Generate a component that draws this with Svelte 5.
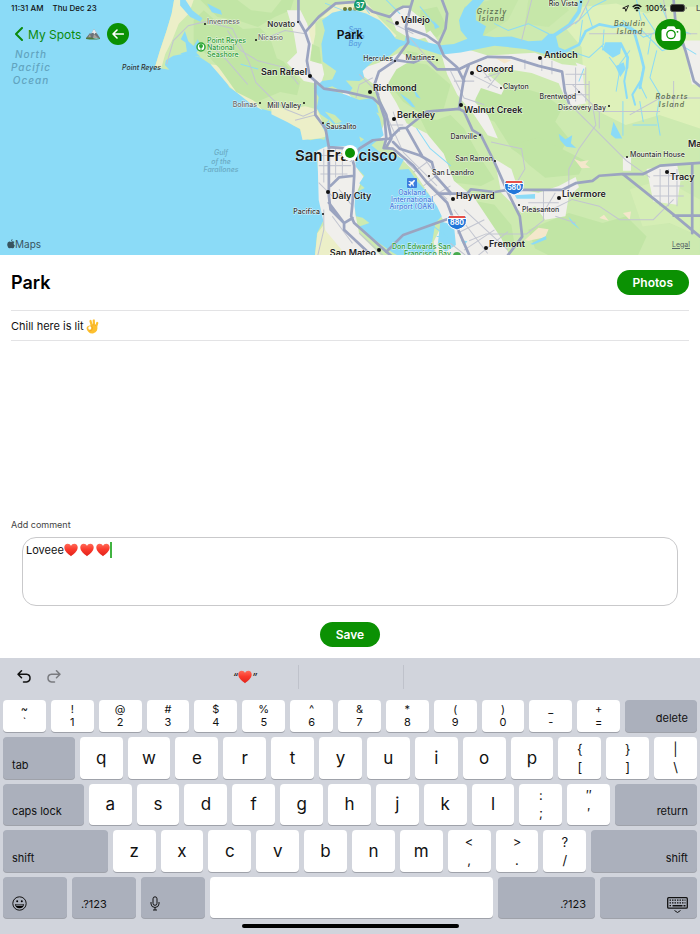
<script lang="ts">
	type Label = { t: string; x: number; y: number; kind: string; dot?: number[]; end?: boolean };

	const labels: Label[] = [
		{ t: 'Inverness', x: 207, y: 24, kind: 'village', dot: [205, 24] },
		{ t: 'Nicasio', x: 258, y: 40, kind: 'village', dot: [256, 40] },
		{ t: 'Bolinas', x: 257, y: 107, kind: 'village', dot: [260, 103], end: true },
		{ t: 'Mill Valley', x: 301, y: 108, kind: 'town', dot: [304, 103], end: true },
		{ t: 'Hercules', x: 393, y: 61, kind: 'town', dot: [395, 61], end: true },
		{ t: 'Martinez', x: 435, y: 60, kind: 'town', dot: [437, 60], end: true },
		{ t: 'Sausalito', x: 326, y: 129, kind: 'town', dot: [323, 123] },
		{ t: 'Pacifica', x: 320, y: 214, kind: 'town', dot: [323, 214], end: true },
		{ t: 'San Leandro', x: 432, y: 175, kind: 'town', dot: [429, 176] },
		{ t: 'San Ramon', x: 493, y: 161, kind: 'town', dot: [495, 161], end: true },
		{ t: 'Danville', x: 477, y: 139, kind: 'town', dot: [480, 135], end: true },
		{ t: 'Pleasanton', x: 522, y: 212, kind: 'town', dot: [519, 205] },
		{ t: 'Mountain House', x: 630, y: 157, kind: 'town', dot: [627, 157] },
		{ t: 'Clayton', x: 503, y: 89, kind: 'town', dot: [501, 88] },
		{ t: 'Brentwood', x: 576, y: 99, kind: 'town', dot: [579, 92], end: true },
		{ t: 'Discovery Bay', x: 606, y: 110, kind: 'town', dot: [609, 106], end: true },
		{ t: 'Rio Vista', x: 578, y: 6, kind: 'town', dot: [581, 2], end: true },
		{ t: 'Novato', x: 295, y: 27, kind: 'mid', dot: [298, 22], end: true },
		{ t: 'Vallejo', x: 401, y: 23, kind: 'city', dot: [397, 23] },
		{ t: 'San Rafael', x: 307, y: 75, kind: 'city', dot: [310, 76], end: true },
		{ t: 'Richmond', x: 373, y: 91, kind: 'city', dot: [370, 92] },
		{ t: 'Berkeley', x: 397, y: 118, kind: 'city', dot: [394, 119] },
		{ t: 'Daly City', x: 332, y: 199, kind: 'city', dot: [328, 192] },
		{ t: 'San Mateo', x: 376, y: 256, kind: 'city', dot: [379, 250], end: true },
		{ t: 'Hayward', x: 456, y: 199, kind: 'city', dot: [453, 199] },
		{ t: 'Livermore', x: 562, y: 197, kind: 'city', dot: [559, 198] },
		{ t: 'Fremont', x: 489, y: 247, kind: 'city', dot: [486, 248] },
		{ t: 'Tracy', x: 670, y: 180, kind: 'city', dot: [667, 172] },
		{ t: 'Ma', x: 688, y: 147, kind: 'city' },
		{ t: 'Walnut Creek', x: 464, y: 113, kind: 'city', dot: [461, 105] },
		{ t: 'Concord', x: 476, y: 72, kind: 'city', dot: [472, 73] },
		{ t: 'Antioch', x: 544, y: 58, kind: 'city', dot: [540, 58] },
		{ t: 'San Francisco', x: 295, y: 161, kind: 'metro' },
		{ t: 'Point Reyes', x: 122, y: 70, kind: 'cape' },
		{ t: 'Point Reyes', x: 207, y: 43, kind: 'park' },
		{ t: 'National', x: 207, y: 50, kind: 'park' },
		{ t: 'Seashore', x: 207, y: 57, kind: 'park' },
		{ t: 'Don Edwards San', x: 451, y: 249, kind: 'park', end: true },
		{ t: 'Francisco Bay', x: 451, y: 256, kind: 'park', end: true },
		{ t: 'Oakland', x: 412, y: 195, kind: 'airport' },
		{ t: 'International', x: 412, y: 202, kind: 'airport' },
		{ t: 'Airport (OAK)', x: 412, y: 209, kind: 'airport' },
		{ t: 'San', x: 355, y: 32, kind: 'bay' },
		{ t: 'Pablo', x: 355, y: 39, kind: 'bay' },
		{ t: 'Bay', x: 355, y: 46, kind: 'bay' },
		{ t: 'North', x: 31, y: 58, kind: 'ocean' },
		{ t: 'Pacific', x: 31, y: 71, kind: 'ocean' },
		{ t: 'Ocean', x: 31, y: 84, kind: 'ocean' },
		{ t: 'Gulf', x: 221, y: 155, kind: 'gulf' },
		{ t: 'of the', x: 221, y: 164, kind: 'gulf' },
		{ t: 'Farallones', x: 221, y: 172, kind: 'gulf' },
		{ t: 'Grizzly', x: 492, y: 14, kind: 'island' },
		{ t: 'Island', x: 492, y: 21, kind: 'island' },
		{ t: 'Bouldin', x: 630, y: 26, kind: 'island' },
		{ t: 'Island', x: 630, y: 34, kind: 'island' },
		{ t: 'Roberts', x: 672, y: 99, kind: 'island' },
		{ t: 'Island', x: 672, y: 107, kind: 'island' }
	];

	const pairs = ['~`', '!1', '@2', '#3', '$4', '%5', '^6', '&7', '*8', '(9', ')0', '_-', '+='];

	type Key = { a: string; b?: string; size?: string; icon?: string };
	const letters = (s: string): Key[] => [...s].map((a) => ({ a }));
	const twins = (list: string[]): Key[] => list.map((p) => ({ a: p[0], b: p[1] }));

	const rows: Key[][] = [
		[...twins(pairs), { a: 'delete', size: 'w72 right' }],
		[{ a: 'tab', size: 'w72' }, ...letters('qwertyuiop'), ...twins(['{[', '}]', '|\\'])],
		[{ a: 'caps lock', size: 'w81' }, ...letters('asdfghjkl'), ...twins([':;', '″′']), { a: 'return', size: 'w82 right' }],
		[{ a: 'shift', size: 'w105' }, ...letters('zxcvbnm'), ...twins(['<,', '>.', '?/']), { a: 'shift', size: 'w106 right' }],
		[
			{ a: 'Emoji', size: 'w64', icon: 'emoji' },
			{ a: '.?123', size: 'w64' },
			{ a: 'Dictate', size: 'w64', icon: 'mic' },
			{ a: ' ', size: 'space' },
			{ a: '.?123', size: 'w97 right' },
			{ a: 'Hide keyboard', size: 'w97 right', icon: 'hide' }
		]
	];

	let comment = $state('Loveee');
</script>

{#snippet heart()}
	<svg class="heart" viewBox="0 0 14 14" aria-hidden="true">
		<defs>
			<linearGradient id="red" x1="0" y1="0" x2="0" y2="1">
				<stop offset="0" stop-color="#ff6a58" />
				<stop offset=".45" stop-color="#fb3a2c" />
				<stop offset="1" stop-color="#e0231b" />
			</linearGradient>
		</defs>
		<path fill="url(#red)" d="M7 13.3C4.2 11 .4 8.400.3 4.600.2 2.500 1.700.8 3.700.8 5.200.8 6.400 1.600 7 2.900 7.600 1.600 8.800.8 10.300.8c2 0 3.500 1.700 3.400 3.800C13.600 8.400 9.800 11 7 13.300z" />
	</svg>
{/snippet}

<div class="screen">
	<section class="map">
		<svg class="chart" viewBox="0 0 700 255" aria-label="Map of the Bay Area">
			<rect width="700" height="255" fill="#8bdbf7" />
			<g transform="translate(170) scale(.338)">
				<!-- land -->
				<path fill="#cdeab0" d="M12 0L5 40-10 90-30 150-45 200-2 206-15 192-12 178 10 165 45 158 90 170 120 190 140 212 165 235 175 258 205 278 240 300 270 322 300 330 320 345 345 352 362 370 385 382 392 405 415 415 440 410 462 415 465 432 440 445 436 480 440 540 450 600 455 650 435 690 428 765H1568V0z" />
				<!-- dunes -->
				<g fill="#ecefc8">
					<path d="M12 0h58l-14 40-30 30-20 50-20 40-12 42-19-2L-30 150-10 90 5 40z" />
					<path d="M400 95l90-80 90-10 40 50 50 50-10 14-50-60-40-16-70-6-70 24v40l-12 60-20-6z" />
					<path d="M455 665l40-8 20 30 40 50 10 28H428l8-75z" />
					<path d="M300 310l40 14 60-10 36 10 20 50 6 30-22 6-48 4-7-32-40-22-45-22z" />
					<path d="M120 190l24 4 40 50 60 50 30 32-36-20-60-48-34-40z" />
				</g>
				<!-- woodland -->
				<g fill="#c1e5a5">
					<path d="M70 60l30-30 40 36 36-10 40 30 50-4 30 30 20 60 20 10 50 60-10 40-50-10-70 30-60-30-50-70-40-44-36-20z" />
					<path d="M90 0h110l40 30 60 8 30-38h36l-10 30-46 20-50 30-60-20-60-10zM420 130l22 10 6 44-18 20-14-30z" />
					<path d="M640 215l60-34 60 10 70 60-20 70-60 20-60-40-40-50z" />
					<path d="M740 350l50 4 40-14 40 40 50 90 40 60-40 20-80-10-50-50-20-80z" />
					<path d="M900 240l50 20 60-10 100 30 50 40-20 40 40 50-30 50-80 20-60-40-50-80-50-20z" />
					<path d="M1010 430l80-24 60 30 80 40-20 40-100 10-50-40z" />
					<path d="M880 590l80 16 50 60 10 60-60 10-60-60-20-40zM1060 680l120-50 100 30 70-20 60 60-30 65h-240l-60-30z" />
					<path d="M700 150l30 6 20 20-40 10zM740 30l50-10 30 60-30 30-50-30z" />
					<path d="M870 20l80-20h80l-30 60-80 50-34-30zM1060 0h100l20 30-60 50-70-10z" opacity=".6" />
					<path d="M470 620l20-8 6 20-14 10zM510 550l60-8-10 20-40 12z" />
				</g>
				<g fill="#def1ba">
					<path d="M1220 20l100-10 90 30 60-20h98v360l-120-40-100 30-120-60-10-170-50-60 40-30z" />
					<path d="M1360 560l100-30 108 60v110l-90-40-80 10z" opacity=".5" />
				</g>
				<!-- built-up areas -->
				<g fill="#f0efec">
					<path d="M346 30h40l20 40 14 60-6 50 36 10 6 30-10 30-50-10-50-54 30-30-10-60z" />
					<path d="M436 445l30-13h60l20 20 10 50 16 20-20 50-4 60 12 60 50 50 60 60h-110l-50-60-50-60-20-90z" />
					<path d="M560 205l60-20 60-30 40 20-50 30-30 50 30 50 30 60 60 30 50 60 30 80 60 50 80 120 30 60H790l-10-50 30-60-30-60-60-90-40-40-60-60 20-60-30-90-50-40-10-50z" />
					<path d="M650 40l50-20 50 40 10 50-40 10-50-30zM770 90l30 40-30 4-20-30z" />
					<path d="M800 150l60-10 80 24 140-8 80 34 60 6 10 110-50 10-30-70-80-30-100-16-30 20 50 40-10 20-60-20-20 40 40 40 30 70-30-10-40-60-50-60-30-60z" />
					<path d="M960 470l50 30 20 60 60 10 60-20 50-26 10 30-30 26-10 60-60 10-30-40-40 20-60-60z" />
					<path d="M1410 500l90-14 10 50-10 70-70-10zM1340 465h24v40h-24zM1520 120h48v130h-24zM1200 185l30 10-10 30zM480 300l40-30 30 30 40 14-10 10-70-8z" />
				</g>
				<g fill="#f4e7cb">
					<path d="M1050 710l40-36 30 4-10 24-50 10zM1195 470l20 8 24-4-10 12 14 10-26 2zM1340 630l24-4-4 24zM1270 645l14-10 14 18zM960 170l50 8-20 10z" />
				</g>
				<!-- bay and straits -->
				<path fill="#8bdbf7" d="M455 420L462 395 450 375 470 355 445 338 434 320 440 288 425 262 450 240 480 235 492 210 452 182 448 130 458 90 450 60 480 38 530 25 580 40 620 60 650 90 668 115 694 122 698 106 720 112 760 125 800 134 840 130 880 115 860 90 855 60 870 25 895 0 930 0 905 30 905 60 935 78 925 105 960 110 1010 108 1060 122 1100 120 1120 100 1140 100 1150 140 1180 152 1160 158 1110 160 1050 145 960 135 860 155 800 162 750 146 700 130 680 138 650 165 600 182 570 210 575 230 560 240 520 238 540 260 530 275 508 270 480 255 460 262 520 280 560 296 600 290 612 310 625 370 632 400 596 430 620 450 660 458 692 472 676 502 706 500 730 535 765 575 790 610 804 640 785 660 775 720 790 765 690 765 655 745 620 720 592 700 560 670 590 660 570 644 550 640 546 610 548 570 576 556 560 542 575 520 550 494 545 450 520 432 465 436z" />
				<g fill="#cdeab0">
					<path d="M458 330l30 10 20 20-18 6zM470 352l14 16 22-4-14 14-20-4zM560 404l14 8-10 8zM610 332l14 6-2 12z" />
				</g>
				<!-- inland water -->
				<g fill="#8bdbf7">
					<path d="M44 92l10 30 16 14 12-20 10 20-14 20 12 12-40-4-20-6 20-6-4-26-14-10zM30 0h16l20 30 30 24-6 10-30-14-30-34zM110 10l40 20 4 14-30-8z" />
					<path d="M1288 125l48 0-4 34-22 12-30-24zM1312 360l26 50-20 0-14-12zM1318 196l24-12 6 20-16 24zM1150 396l20 16 20-12-4 24 16 14-30-4-18-20z" />
					<path d="M680 276l30 20 16 22-10-2-24-24zM720 260l22 32-14-6zM778 60l20 20-14 6zM1066 722l46-24 2 10-40 16zM1178 640l36 40-26-20zM1020 578l60-4v14h-54zM800 655l40 10 6 60-30 20-24-20zM860 710l20 4-10 12z" />
				</g>
				<g fill="none" stroke="#8bdbf7" stroke-linecap="round" stroke-linejoin="round">
					<path stroke-width="11" d="M1216 0l-6 34-28 40-50 34" />
					<path stroke-width="8" d="M1160 156l50-24 20-40 40-20 40 8 30-6 40 20M1334 130l20 40-2 30M1372 90l20 70 10 40-12 60" />
					<path stroke-width="3" d="M1180 150l60 20 44-40M1220 60l-8 60M1230 20l20 60M1200 70l50-50 40-20M1284 88l-4 60M1340 60l60 50 50-20M1400 40l40 60 60 20M1396 90l60 60 50-20 50 30M1440 150l-20 80 30 50-10 60 10 60M1300 170l30 40-10 60M1400 200l-10 50 20 40M1210 240l14-36M1340 300v100M1390 300l10 60M1370 370h70M1330 190l30-40M1450 10l30 70 60 20M1380 0l14 60M1424 100l-10 60" />
					<path stroke-width="6" d="M1352 200l-8 40 8 50M1392 240l-24 40 8 30" />
					<path stroke-width="3" d="M460 10l50 20M560 0l30 40M640 0l40 40M730 380l40 60 60 50M780 670l40 30M790 700h40M210 190l50 14M740 20l40 50M1000 90l60-20 60 30M960 70l40 20" />
				</g>
				<!-- minor roads -->
				<g fill="none" stroke="#c2c5d0" stroke-width="3">
					<path d="M-10 190l20-70 44-44 50-12 80 20 50 100 20 60 50 50 40 30 50 20 40-18M170 90l40 60 50 30 80 20 40 50M110 120l60 60 60 70M400 100l-60-10-50 20M430 340l-60 16" />
					<path d="M445 460h96M440 490h96M445 515h80M455 440v100M490 440v85M510 440v80M440 540l40 40M500 560l40 50M480 640l60 80M560 690l80 75M455 620v60l-20 85" />
					<path d="M600 230l-40 20-10 40M560 220l60 60M640 340l50 110M660 330l20 60M650 370h40M690 450l100 100M700 480l120 110M740 450l90 130M720 510l40-30M750 550l50-40M780 580l50-30M840 620l100 130M870 620l130 120M850 690l80-40M870 740l90-60M830 720l50 40M900 765l100-80" />
					<path d="M830 210l40 80 60 20M840 240h60M890 220l80 40M910 190l40 50M930 230l60-20M980 210l-40 50M700 100l60 70M640 60l80 40M1170 220h60M1170 250h70M1180 280h60M1200 200v100M1230 200v100M1240 240v80l30 10v50M1100 170v40M1130 180v40M1050 175v30" />
					<path d="M1070 0l-30 120M1240 0l-30 60-50 30M1180 305l80 80 90 90 70 50M1360 340l90-50h118M1270 330h180M1240 100h320M1460 0l10 60M1490 240v80" />
					<path d="M950 420l90 20 10 60-30 50M1105 562v90l-50 40-120 0-50 20M1140 570l-30 50M1180 560v-60l30-60 50-70-10-60-60-60M1060 600h90M1070 620h60l60-30 80 20 60 40 100 0 60-60M1140 640l60 20M1430 520h90M1430 550h90M1430 580h90M1450 500v110M1475 500v110M1500 500v110" />
				</g>
				<!-- highways -->
				<g fill="none" stroke="#9ba4c0" stroke-width="8" stroke-linejoin="round" stroke-linecap="round">
					<path d="M380 0V60L400 95 412 130 405 180 413 225 455 262 520 272 600 290 622 310 635 350 640 410 632 438 660 440 720 490 760 540 820 600 835 640 870 720 890 765" />
					<path d="M400 95L440 50 490 10 560 5 600 35 650 50 670 30 690 20 712 20M718 0L712 20 698 80 705 125 665 180 618 212 605 250 620 300 640 340 655 410 640 435" />
					<path d="M430 245V340L460 380 470 435V580L475 620 515 660V680L590 750 600 765M470 435L530 440 545 490V520L500 525 475 550M545 520L540 600 536 640 545 660 590 700 640 745 665 765M470 600L515 660 540 645" />
					<path d="M535 475L560 440 600 415 650 410 680 380 700 378 760 330 855 322 870 330 895 385 920 400 960 480 1000 570 1035 640 1042 700 1000 755" />
					<path d="M700 380L745 460M660 420L680 440 740 460 775 480 785 520 830 570M795 573H880L890 560 960 568 1000 562H1160L1200 542 1250 535 1270 520 1335 515H1400L1450 490 1568 482M640 745L690 695 830 645" />
					<path d="M855 322L870 230 885 190 940 168 1010 170 1090 195 1160 212 1168 270 1180 305M668 178L720 185 755 170 790 205 855 205 885 190M805 0L820 40 815 85 795 130 810 165 850 200 870 240M705 85L760 105 795 130" />
					<path d="M1340 515L1490 635 1568 700M1490 638H1568M1545 485V690M1490 0L1495 60 1525 150 1550 240 1568 255" />
				</g>
			</g>

			<!-- shields and pins -->
			<circle cx="360" cy="5" r="6" fill="#159a6c" />
			<text x="360" y="8" class="shield" text-anchor="middle">37</text>
			<g fill="#6b7b39"><circle cx="345" cy="9" r="2" /><circle cx="350" cy="9" r="2" /><circle cx="355" cy="9" r="2" opacity=".5" /></g>
			{#each [{ n: '580', x: 514, y: 187 }, { n: '880', x: 457, y: 222 }] as s}
				<g transform="translate({s.x} {s.y})">
					<path fill="#2277d9" stroke="#fff" d="M-9-6H9Q11 3 5 6L0 8-5 6Q-11 3-9-6z" />
					<path fill="#e6504a" d="M-8-6H8V-4H-8z" />
					<path stroke="#fff" d="M-9-3.500H9" />
					<text class="shield" y="3" text-anchor="middle">{s.n}</text>
				</g>
			{/each}
			<circle cx="201" cy="47" r="4" fill="#fff" stroke="#2da637" stroke-width="1.500" />
			<circle cx="201" cy="46" r="2" fill="#2da637" />
			<path stroke="#2da637" d="M201 47v3" />
			<circle cx="457" cy="256" r="4" fill="#47ab4d" />
			<rect x="407" y="178" width="10" height="10" rx="1" fill="#3c7ddd" />
			<path fill="#fff" d="M415 180l-1.500.3-1.500 1.400-3-.7-.6.6 2.400 1.400-1.300 1.300-1-.1-.4.5 1.300.8.8 1.300.5-.4-.1-1 1.300-1.300 1.400 2.400.6-.6-.7-3 1.400-1.500z" />

			{#each labels as l}
				{#if l.dot}<circle cx={l.dot[0]} cy={l.dot[1]} r={l.kind === 'city' ? 2 : 1} fill="#111" />{/if}
				<text class={l.kind} class:end={l.end} x={l.x} y={l.y}>{l.t}</text>
			{/each}

			<circle cx="350" cy="153" r="8" fill="#fff" />
			<circle cx="350" cy="153" r="5" fill="#0b9103" />
		</svg>

		<div class="overlay">
			<div class="status">
				<span>11:31 AM</span>
				<span>Thu Dec 23</span>
				<span class="signals">
					<svg width="7" height="7" viewBox="0 0 7 7"><path d="M6.500.5L.7 3.200 3.300 3.700 3.800 6.300z" fill="none" stroke="#222" /></svg>
					<svg width="10" height="8" viewBox="0 0 10 8" fill="none" stroke="#111"><path stroke-width="1.500" d="M.7 3Q5-1 9.300 3M2.400 4.800Q5 2.500 7.600 4.800" /><path fill="#111" stroke="none" d="M3.500 6Q5 4.800 6.500 6L5 7.700z" /></svg>
					<span>100%</span>
					<svg width="17" height="8" viewBox="0 0 17 8"><rect x=".5" y=".5" width="14" height="7" rx="2" fill="#111" stroke="#555" /><path d="M15.700 2.500v3q1-.5 1-1.500t-1-1.500z" fill="#444" /></svg>
				</span>
				<span class="cut">L</span>
			</div>
			<nav class="bar">
				<div class="side">
					<a class="back" href="#spots">
						<svg width="8" height="14" viewBox="0 0 8 14"><path d="M7 1L1 7l6 6" fill="none" stroke="#0b8a0b" stroke-width="2" stroke-linecap="round" stroke-linejoin="round" /></svg>
						<span>My Spots</span>
						<svg width="14" height="12" viewBox="0 0 14 12" aria-hidden="true">
							<path fill="#6d7378" d="M0 10L4 5l1 1 3-5 6 9z" />
							<path fill="#e9edf0" d="M5.500 5L8 1l3 4.500-1.500-.7L8.400 6.200 7.200 4.800z" />
							<path fill="#a8a39b" d="M8 6l4 4H7zM4 6l1 4H2z" />
							<path fill="#4f7a3d" d="M0 10q4-1.500 7 0t7 0V11q-7 1-14 0z" />
						</svg>
					</a>
					<button class="round" aria-label="Previous spot">
						<svg width="12" height="10" viewBox="0 0 12 10"><path d="M11.300 5H1M5 1L1 5l4 4" fill="none" stroke="#fff" stroke-width="1.600" stroke-linecap="round" stroke-linejoin="round" /></svg>
					</button>
				</div>
				<h2>Park</h2>
				<div class="side last">
					<button class="round camera" aria-label="Take photo">
						<svg width="20" height="16" viewBox="0 0 20 16">
							<path fill="#fff" d="M2.500 3H5l1.300-2.200Q6.700.3 7.400.3h5.200q.7 0 1.100.5L15 3h2.500Q19.500 3 19.500 5v8q0 2-2 2h-15q-2 0-2-2V5q0-2 2-2z" />
							<circle cx="10" cy="8.500" r="4.200" fill="none" stroke="#0b9103" stroke-width="1.300" />
							<circle cx="16.500" cy="5.800" r=".9" fill="#0b9103" />
						</svg>
					</button>
				</div>
			</nav>
			<div class="credit">
				<span class="brand">
					<svg width="8" height="10" viewBox="0 0 8 10" fill="#38545f"><path d="M5.500 0Q5.600 1.600 4 2.200 3.900.6 5.500 0zM4 2.900q1.900-1.200 3.500.2-1.900 1.500.3 3.300Q6.800 9.800 5.200 9.200q-1.200-.6-2.300 0Q1.300 9.900.4 6.800-.3 3.200 2.200 2.600 3 2.500 4 2.900z" /></svg>
					<span>Maps</span>
				</span>
				<a href="#legal">Legal</a>
			</div>
		</div>
	</section>

	<main>
		<header>
			<h1>Park</h1>
			<button class="pill">Photos</button>
		</header>
		<p class="note">
			<span>Chill here is lit</span>
			<svg width="13" height="15" viewBox="0 0 26 30" role="img" aria-label="OK hand">
				<path fill="none" stroke="#fdc02f" stroke-width="4.500" stroke-linecap="round" d="M12 15L9 4M16 14L15.500 3M20 16L22.500 8" />
				<path fill="#fdc02f" d="M10 13q4-2 12 1 2 4 0 9-2 4-8 6-6 .5-9-3-4-4-4-8 1-5 6-5z" />
				<ellipse cx="7.500" cy="18" rx="3" ry="3.500" fill="#fff" />
				<path fill="none" stroke="#e8951a" stroke-width="1.200" d="M10 13q4 3 2.500 7-1 4-6 4M14 13v-3M18.500 14l.5-3" />
			</svg>
		</p>

		<div class="compose">
			<label for="comment">Add comment</label>
			<div class="field">
				<textarea id="comment" bind:value={comment}></textarea>
				<div class="typed">{@render heart()}{@render heart()}{@render heart()}<i class="caret"></i></div>
			</div>
			<button class="pill">Save</button>
		</div>
	</main>

	<section class="keyboard">
		<div class="tools">
			<div class="history">
				<button aria-label="Undo"><svg width="14" height="13" viewBox="0 0 14 13"><path d="M4.500.8L1 4.200l3.500 3.500M1 4.200h8.500q3.500.3 3.500 3.900T9.500 12H6.500" /></svg></button>
				<button aria-label="Redo" disabled><svg width="14" height="13" viewBox="0 0 14 13"><path d="M9.500.8L13 4.200 9.500 7.700M13 4.200H4.500Q1 4.500 1 8.100T4.500 12h3" /></svg></button>
			</div>
			<div class="guesses">
				<button class="guess">“{@render heart()}”</button>
				<button class="guess" aria-label="Second suggestion"></button>
				<button class="guess" aria-label="Third suggestion"></button>
			</div>
			<div class="rest"></div>
		</div>
		<div class="keys">
			{#each rows as row, r}
				<div class="row" class:digits={r === 0}>
					{#each row as key}
						<button class="key {key.size ?? ''}" class:fn={key.size && key.size !== 'space'} class:twin={key.b} aria-label={key.icon || key.size === 'space' ? key.a : undefined}>
							{#if key.icon === 'emoji'}
								<svg class="cap" width="15" height="15" viewBox="0 0 15 15"><circle cx="7.500" cy="7.500" r="6.700" fill="none" stroke="#111" /><circle cx="5.200" cy="5.300" r="1" /><circle cx="9.800" cy="5.300" r="1" /><path d="M3 8.200h9q-.5 4-4.500 4T3 8.200z" /><path d="M4.200 9.200h6.600" stroke="#abb0bc" /></svg>
							{:else if key.icon === 'mic'}
								<svg class="cap" width="10" height="15" viewBox="0 0 10 15" fill="none" stroke="#111"><rect x="3" y=".8" width="4" height="8.500" rx="2" /><path d="M1 6v2q.3 3.300 4 3.500 3.700-.2 4-3.500V6M5 11.500V14M3 14h4" /></svg>
							{:else if key.icon === 'hide'}
								<svg class="cap hide" width="21" height="17" viewBox="0 0 21 17" fill="none" stroke="#111"><rect x=".7" y=".7" width="19.600" height="10.500" rx="1" stroke-width="1.300" /><path stroke-dasharray="1.500 1" stroke-width="1.300" d="M2.500 3.200h16M2.500 5.800h16M2.500 8.600h2" /><path stroke-width="1.500" d="M5.500 8.700h10M16.500 8.700h2" /><path d="M7.500 13.500l3 2 3-2" /></svg>
							{:else if key.b}
								<span>{key.a}</span><span>{key.b}</span>
							{:else}
								<span class="cap">{key.a}</span>
							{/if}
						</button>
					{/each}
				</div>
			{/each}
		</div>
		<div class="home"></div>
	</section>
</div>

<style>
:global(body) {
	margin: 0;
}
.screen {
	min-height: 100vh;
	display: flex;
	flex-direction: column;
	background: #fff;
	color: #111;
	font-family: Inter, "Liberation Sans", sans-serif;
}
button {
	font: inherit;
	color: inherit;
	border: none;
	padding: 0;
	background: none;
	cursor: pointer;
}
a {
	color: inherit;
	text-decoration: none;
}

/* map */
.map {
	position: relative;
}
.chart {
	display: block;
	width: 100%;
}
.chart text {
	paint-order: stroke;
	stroke: rgba(255, 255, 255, 0.7);
	stroke-width: 1px;
	fill: #333;
	font-size: 7px;
	font-weight: 500;
}
.chart .end {
	text-anchor: end;
}
.chart .village {
	fill: #666;
}
.chart .mid {
	font-size: 8px;
	font-weight: 600;
}
.chart .city {
	font-size: 9px;
	font-weight: 600;
	fill: #222;
}
.chart .metro {
	font-size: 15px;
	font-weight: 600;
	fill: #1c1c1c;
}
.chart .cape {
	font-style: italic;
	stroke: none;
}
.chart .park {
	fill: #2e9c3a;
}
.chart .airport {
	fill: #4a7ddd;
	text-anchor: middle;
}
.chart .bay, .chart .ocean, .chart .gulf, .chart .island {
	font-style: italic;
	text-anchor: middle;
	stroke: none;
}
.chart .bay {
	fill: #5a9ee0;
}
.chart .ocean {
	fill: #62a4bf;
	font-size: 10px;
	letter-spacing: 1px;
}
.chart .gulf {
	fill: #6aaac3;
}
.chart .island {
	fill: #58694f;
	letter-spacing: 1px;
}
.chart .shield {
	fill: #fff;
	stroke: none;
	font-weight: 700;
}
.overlay {
	position: absolute;
	inset: 0;
	display: flex;
	flex-direction: column;
}
.status {
	display: flex;
	align-items: center;
	gap: 9px;
	height: 16px;
	padding-left: 11px;
	font-size: 8px;
	font-weight: 500;
}
.signals {
	display: flex;
	align-items: center;
	gap: 3px;
	margin-left: auto;
}
.cut {
	width: 4px;
	overflow: hidden;
	color: #555;
}
.bar {
	display: flex;
	align-items: center;
	height: 36px;
	padding: 0 14px;
}
.side {
	flex: 1;
	display: flex;
	align-items: center;
	gap: 7px;
}
.last {
	justify-content: flex-end;
}
.back {
	display: flex;
	align-items: center;
	gap: 5px;
	padding-left: 1px;
	font-size: 12px;
	color: #0b8a0b;
}
.bar h2 {
	margin: 0;
	font-size: 12px;
	font-weight: 600;
}
.round {
	display: flex;
	align-items: center;
	justify-content: center;
	width: 22px;
	height: 22px;
	border-radius: 50%;
	background: #0b9103;
}
.camera {
	width: 31px;
	height: 31px;
}
.credit {
	display: flex;
	align-items: center;
	justify-content: space-between;
	margin-top: auto;
	padding: 0 10px 5px 7px;
	font-size: 7px;
	color: #566;
}
.credit a {
	text-decoration: underline;
}
.brand {
	display: flex;
	align-items: center;
	font-size: 10px;
	color: #38545f;
}

/* spot details */
main {
	flex: 1;
	display: flex;
	flex-direction: column;
	padding: 0 11px;
}
header {
	display: flex;
	align-items: center;
	justify-content: space-between;
	height: 55px;
	border-bottom: 1px solid #e3e3e5;
}
h1 {
	margin: 0;
	font-size: 18px;
	font-weight: 600;
	color: #000;
}
.pill {
	height: 25px;
	padding: 0 16px;
	border-radius: 13px;
	background: #0b9103;
	color: #fff;
	font-size: 12px;
	font-weight: 600;
}
.note {
	display: flex;
	align-items: center;
	gap: 2px;
	margin: 0;
	height: 28px;
	padding-top: 1px;
	border-bottom: 1px solid #e3e3e5;
	font-size: 11px;
}
.compose {
	display: flex;
	flex-direction: column;
	align-items: center;
	margin-top: auto;
	padding-bottom: 11px;
}
label {
	align-self: flex-start;
	font-size: 9px;
	line-height: 12px;
	color: #444;
}
.field {
	position: relative;
	align-self: stretch;
	margin: 6px 11px 16px;
}
textarea {
	display: block;
	box-sizing: border-box;
	width: 100%;
	height: 69px;
	padding: 4px 3px;
	border: 1px solid #c9c9cb;
	border-radius: 14px;
	resize: none;
	outline: none;
	font: 11px/17px Inter, "Liberation Sans", sans-serif;
	color: #111;
}
.typed {
	position: absolute;
	top: 5px;
	left: 42px;
	display: flex;
	align-items: center;
	gap: 2px;
	pointer-events: none;
}
.heart {
	width: 14px;
	height: 14px;
	flex: none;
}
.caret {
	width: 2px;
	height: 16px;
	margin-left: -2px;
	background: #41b341;
}

/* keyboard */
.keyboard {
	display: flex;
	flex-direction: column;
	background: #d1d4dc;
}
.tools {
	display: flex;
	align-items: center;
	box-sizing: border-box;
	height: 42px;
	padding: 0 17px 4px;
}
.history {
	flex: 1;
	display: flex;
	gap: 16px;
}
.history svg {
	fill: none;
	stroke: #111;
	stroke-width: 1.5;
	stroke-linecap: round;
	stroke-linejoin: round;
}
.history :disabled {
	opacity: 0.45;
}
.guesses {
	display: flex;
}
.rest {
	flex: 1;
}
.guess {
	display: flex;
	align-items: center;
	justify-content: center;
	width: 105px;
	height: 24px;
	box-sizing: border-box;
	font-size: 11px;
	font-style: italic;
}
.guess + .guess {
	border-left: 1px solid #bfc2cb;
}
.keys {
	display: grid;
	grid-template-rows: 32px repeat(4, 1fr);
	gap: 5px;
	height: 218px;
	padding: 0 3px;
}
.row {
	display: flex;
	gap: 5px;
}
.key {
	flex: 43 1 0;
	min-width: 0;
	display: flex;
	align-items: center;
	justify-content: center;
	border-radius: 4px;
	background: #fff;
	box-shadow: 0 1px 0 #9fa2aa;
	font-size: 17px;
}
.twin {
	flex-direction: column;
	font-size: 13px;
	line-height: 18px;
}
.digits .twin {
	font-size: 11px;
	line-height: 13px;
}
.fn {
	align-items: flex-end;
	justify-content: flex-start;
	background: #abb0bc;
	font-size: 11px;
}
.fn .cap {
	margin: 0 9px 7px;
}
.fn .hide {
	margin-bottom: 4px;
}
.right {
	justify-content: flex-end;
}
.w64 { flex-grow: 64; }
.w72 { flex-grow: 72; }
.w81 { flex-grow: 81; }
.w82 { flex-grow: 82; }
.w97 { flex-grow: 97; }
.w105 { flex-grow: 105; }
.w106 { flex-grow: 106; }
.space { flex-grow: 283; }
.home {
	align-self: center;
	width: 31%;
	height: 4px;
	margin: 6px 0;
	border-radius: 2px;
	background: #000;
}
</style>
